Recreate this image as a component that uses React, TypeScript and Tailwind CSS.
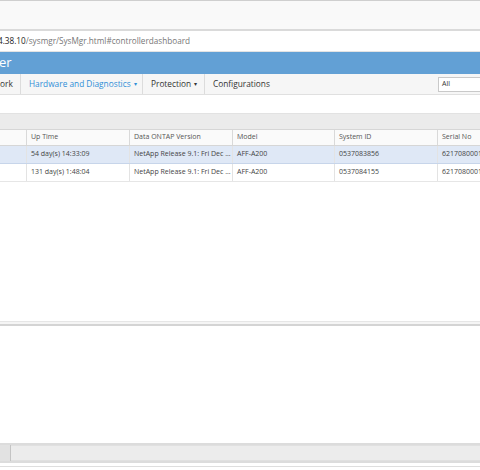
import React from 'react';

const columns = [
  { label: '', w: 'w-[27px]' },
  { label: 'Up Time', w: 'w-[103px]' },
  { label: 'Data ONTAP Version', w: 'w-[103px]' },
  { label: 'Model', w: 'w-[102px]' },
  { label: 'System ID', w: 'w-[103px]' },
  { label: 'Serial No', w: 'w-[60px]' },
];

const rows = [
  ['', '54 day(s) 14:33:09', 'NetApp Release 9.1: Fri Dec ...', 'AFF-A200', '0537083856', '621708000131'],
  ['', '131 day(s) 1:48:04', 'NetApp Release 9.1: Fri Dec ...', 'AFF-A200', '0537084155', '621708000145'],
];

const Caret = () => <span className="ml-[3px] text-[6px]">▾</span>;

export default function App() {
  return (
    <div className="w-[480px] h-[470px] overflow-hidden bg-white flex flex-col font-['Open_Sans',sans-serif] text-[#333]">
      {/* browser chrome */}
      <div className="h-[29px] shrink-0 border-t border-[#cfcfcf] bg-[#f9f9f9]" />
      <div className="h-[2px] shrink-0 bg-[#dadada]" />
      <div className="h-[21px] shrink-0 flex items-center border-b border-[#e3e3e3] whitespace-nowrap text-[8.2px] overflow-hidden">
        <span className="-ml-[2px] text-[#222]">4.38.10</span>
        <span className="text-[#777]">/sysmgr/SysMgr.html#controllerdashboard</span>
      </div>

      {/* app header */}
      <div className="h-[22px] shrink-0 bg-[#62a0d5] flex items-center text-white text-[13px] overflow-hidden">
        <span className="-ml-[1px]">er</span>
      </div>

      {/* menu */}
      <div className="h-[21px] shrink-0 bg-[#f6f6f6] border-b border-[#e0e0e0] flex items-center text-[8.3px] whitespace-nowrap overflow-hidden">
        <div className="w-[21px] shrink-0 h-full flex items-center border-r border-[#dcdcdc]">ork</div>
        <div className="h-full shrink-0 flex items-center px-[8px] border-r border-[#dcdcdc] text-[#2f8ed6] w-[122px]">
          Hardware and Diagnostics<Caret />
        </div>
        <div className="h-full shrink-0 flex items-center px-[8px] border-r border-[#dcdcdc] w-[62px]">
          Protection<Caret />
        </div>
        <div className="h-full flex items-center px-[8px]">Configurations</div>
        <div className="ml-auto shrink-0 h-[15px] w-[44px] border border-[#c9c9c9] bg-white flex items-center pl-[3px] text-[7px] -mr-[2px]">
          All
        </div>
      </div>

      <div className="h-[18px] shrink-0" />

      {/* grid toolbar */}
      <div className="h-[16px] shrink-0 bg-[#ebebeb] border-t border-[#e2e2e2]" />

      {/* table */}
      <div className="shrink-0 text-[7px] whitespace-nowrap">
        <div className="flex h-[17px] bg-[#fafafa] border-y border-[#d6d6d6]">
          {columns.map((c, i) => (
            <div
              key={i}
              className={`${c.w} shrink-0 overflow-hidden flex items-center px-[4px] text-[#555] ${i < columns.length - 1 ? 'border-r border-[#d9d9d9]' : ''}`}
            >
              {c.label}
            </div>
          ))}
        </div>
        {rows.map((r, ri) => (
          <div
            key={ri}
            className={`flex h-[18px] border-b ${ri === 0 ? 'bg-[#dfe8f6] border-[#c7d5ea]' : 'bg-white border-[#e6e6e6]'}`}
          >
            {r.map((cell, ci) => (
              <div
                key={ci}
                className={`${columns[ci].w} shrink-0 overflow-hidden flex items-center px-[4px] text-[#444] ${ci < r.length - 1 ? 'border-r border-[#e3e3e3]' : ''}`}
              >
                {cell}
              </div>
            ))}
          </div>
        ))}
      </div>

      <div className="flex-1" />

      {/* splitter */}
      <div className="h-[1px] shrink-0 bg-[#e6e6e6]" />
      <div className="h-[2px] shrink-0 bg-[#f5f5f5]" />
      <div className="h-[2px] shrink-0 bg-[#d4d4d4]" />

      <div className="h-[117px] shrink-0" />

      {/* horizontal scrollbar */}
      <div className="h-[20px] shrink-0 bg-[#dcdcdc] flex py-[2px]">
        <div className="w-[11px] bg-[#e2e2e2] border-r border-[#c4c4c4]" />
        <div className="flex-1 bg-[#ececec] border-y border-[#e0e0e0]" />
      </div>
      <div className="h-[3px] shrink-0 bg-white" />
      <div className="h-[1px] shrink-0 bg-[#dedede]" />
      <div className="h-[3px] shrink-0 bg-white" />
    </div>
  );
}
